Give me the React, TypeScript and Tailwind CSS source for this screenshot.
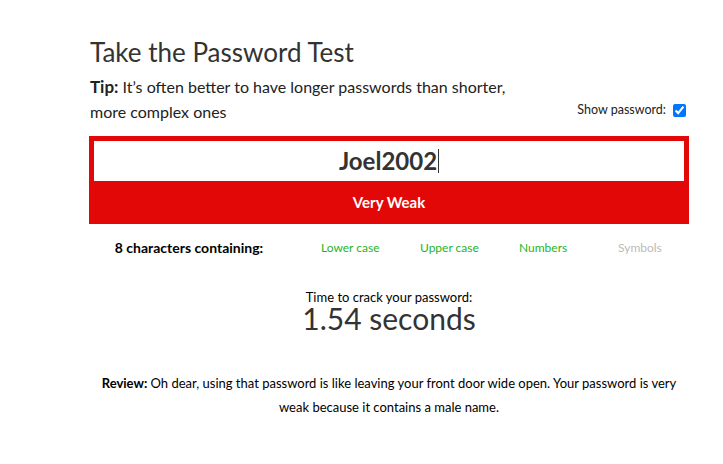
import React from "react";

const criteria = [
  { label: "Lower case", met: true },
  { label: "Upper case", met: true },
  { label: "Numbers", met: true },
  { label: "Symbols", met: false },
];

export default function App() {
  return (
    <div className="min-h-[464px] w-[723px] bg-white font-['Lato',sans-serif] text-[#222]">
      <div className="ml-[89px] w-[600px] pt-[36px]">
        <h1 className="pl-[1px] text-[26px] leading-[32px] text-[#333]">Take the Password Test</h1>

        <div className="mt-[6px] flex items-end justify-between">
          <p className="w-[430px] pl-[1px] text-[16px] leading-[25px]">
            <span className="text-[17px] font-bold">Tip:</span> It’s often better to have longer passwords than shorter,
            more complex ones
          </p>
          <label className="mb-[4px] flex items-center gap-[7px] pr-[3px] text-[12.5px]">
            Show password:
            <input type="checkbox" defaultChecked className="m-0 h-[13px] w-[13px]" />
          </label>
        </div>

        <div className="mt-[12px] bg-[#e30808] p-[5px] pb-0">
          <div className="flex h-[40px] items-center justify-center bg-white text-[24px] font-bold text-[#333]">
            <span>Joel2002</span>
            <span className="ml-[1px] h-[24px] w-[1px] bg-[#333]" />
          </div>
          <div className="flex h-[43px] items-center justify-center text-[15px] font-bold text-white">Very Weak</div>
        </div>

        <div className="mt-[15px] flex items-center text-[12px] leading-[18px]">
          <div className="w-[200px] shrink-0 text-center text-[14px] font-bold text-black">8 characters containing:</div>
          <div className="ml-[32px] flex">
            {criteria.map((c) => (
              <div
                key={c.label}
                className={`shrink-0 ${c.label === "Symbols" ? "" : "w-[99px]"} ${c.met ? "text-[#26b526]" : "text-[#bbbbbb]"}`}
              >
                {c.label}
              </div>
            ))}
          </div>
        </div>

        <div className="mt-[33px] text-center">
          <div className="text-[13px] leading-[15px] text-black">Time to crack your password:</div>
          <div className="text-[30px] leading-[26px] text-[#333]">1.54 seconds</div>
        </div>

        <p className="mx-auto mt-[40px] w-[590px] text-center text-[13px] leading-[24px] text-black">
          <span className="font-bold">Review:</span> Oh dear, using that password is like leaving your front door wide open. Your
          password is very weak because it contains a male name.
        </p>
      </div>
    </div>
  );
}
